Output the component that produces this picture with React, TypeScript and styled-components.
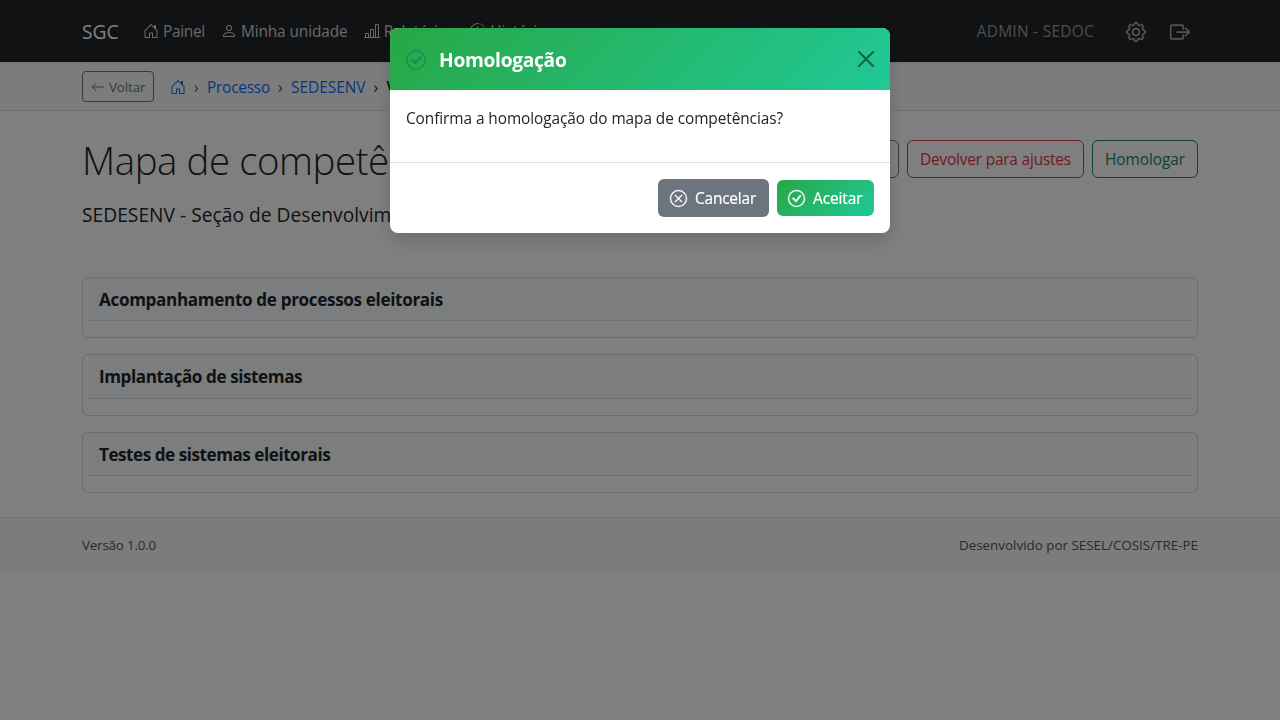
import React from 'react';
import styled, { createGlobalStyle, css } from 'styled-components';
import {
  BsArrowLeft,
  BsBarChartLine,
  BsBoxArrowRight,
  BsCheckCircle,
  BsClockHistory,
  BsGear,
  BsHouseDoor,
  BsPerson,
  BsXCircle,
} from 'react-icons/bs';

const GlobalStyle = createGlobalStyle`
  *, *::before, *::after { box-sizing: border-box; }
  html, body { margin: 0; height: 100%; }
  body {
    background: #fff;
    color: #212529;
    font-family: "Open Sans", "Noto Sans", sans-serif;
    font-size: 15.4px;
    line-height: 24px;
    overflow: hidden;
  }
  svg { display: block; flex: none; }
`;

const successGradient = 'linear-gradient(135deg, #28a745, #20c997)';

const Label = styled.span<{ $tracking?: number }>`
  letter-spacing: ${({ $tracking = 0 }) => $tracking}px;
  white-space: nowrap;
`;

const Container = styled.div`
  display: flex;
  align-items: center;
  width: 1116px;
  margin: 0 auto;
`;

const Navbar = styled.nav`
  display: flex;
  height: 62px;
  background: #212529;
`;

const Brand = styled.a`
  width: 37px;
  margin: 2px 24px 0 0;
  color: #fff;
  font-size: 19.2px;
  letter-spacing: 0.05px;
`;

const NavLinks = styled.div`
  display: flex;
  gap: 16px;
`;

const NavLink = styled.a`
  display: flex;
  align-items: center;
  gap: 4px;
  color: rgba(255, 255, 255, 0.8);

  ${Label} {
    margin-top: 2px;
  }
`;

const NavTools = styled.div`
  display: flex;
  align-items: center;
  gap: 24px;
  margin: 2px 0 0 auto;
  padding-right: 8px;
  color: rgba(255, 255, 255, 0.6);

  svg {
    stroke: currentColor;
    stroke-width: 0.3;
  }
`;

const UserName = styled.span`
  margin-right: 8px;
  color: rgba(255, 255, 255, 0.55);
  letter-spacing: 0.3px;
`;

const TrailBar = styled.div`
  display: flex;
  padding: 8px 0;
  border-top: 1px solid #dee2e6;
  border-bottom: 1px solid #dee2e6;
  background: #f8f9fa;
`;

const BackButton = styled.button`
  display: flex;
  align-items: center;
  gap: 4px;
  width: 72px;
  height: 31px;
  padding: 0 8px;
  border: 1px solid #6c757d;
  border-radius: 4px;
  background: transparent;
  color: #6c757d;
  font: 13.4px/21px "Open Sans", sans-serif;

  ${Label} {
    margin-top: 2px;
  }
`;

const Crumbs = styled.ol`
  display: flex;
  align-items: center;
  margin: 2px 0 0 16px;
  padding: 0;
  list-style: none;
`;

const Crumb = styled.li<{ $current?: boolean }>`
  display: flex;
  align-items: center;
  color: ${({ $current }) => ($current ? '#212529' : '#0d6efd')};
  font-weight: ${({ $current }) => ($current ? 600 : 400)};
  white-space: nowrap;

  svg {
    margin-bottom: 2px;
  }

  li + &::before {
    content: "›";
    width: 5px;
    margin: 0 8px;
    color: ${({ $current }) => ($current ? '#212529' : '#495057')};
    font-weight: 400;
  }
`;

const Main = styled.main`
  width: 1116px;
  margin: 0 auto;
  padding: 24px 0;
`;

const PageHeader = styled.header`
  display: flex;
  align-items: center;
  justify-content: space-between;
  height: 48px;
`;

const PageTitle = styled.h1`
  margin: 2px 0 0;
  font-size: 38.4px;
  font-weight: 300;
  line-height: 48px;
  letter-spacing: -0.42px;
`;

const Actions = styled.div`
  display: flex;
  gap: 8px;
`;

const OutlineButton = styled.button<{ $color: string; $width?: number }>`
  width: ${({ $width }) => ($width ? `${$width}px` : 'auto')};
  height: 38px;
  padding: 2px 12px 0;
  border: 1px solid ${({ $color }) => $color};
  border-radius: 6px;
  background: transparent;
  color: ${({ $color }) => $color};
  font: 15.4px/24px "Open Sans", sans-serif;
`;

const UnitName = styled.p`
  margin: 17px 0 46.9px;
  font-size: 19.2px;
  line-height: 30px;
  letter-spacing: 0.02px;
`;

const CardList = styled.div`
  display: grid;
  gap: 16px;
`;

const Card = styled.section`
  height: 61.5px;
  padding: 0 5px;
  border: 1px solid #d3d6d9;
  border-radius: 6px;
`;

const CardTitle = styled.h2`
  height: 43.2px;
  margin: 0;
  padding: 0 11px;
  border-bottom: 1px solid #dde3ea;
  background: #f8fafc;
  font-size: 17.1px;
  font-weight: 700;
  line-height: 43px;
`;

const Footer = styled.footer`
  display: flex;
  height: 54px;
  padding-top: 1px;
  border-top: 1px solid #dee2e6;
  background: #f8f9fa;
  color: #50565b;
  font-size: 13.4px;
`;

const FooterCredit = styled(Label)`
  margin-left: auto;
`;

const Backdrop = styled.div`
  position: fixed;
  inset: 0;
  display: flex;
  align-items: flex-start;
  justify-content: center;
  padding-top: 28px;
  background: rgba(0, 0, 0, 0.5);
`;

const Dialog = styled.div`
  width: 500px;
  border-radius: 8px;
  background: #fff;
  box-shadow: 0 8px 16px rgba(0, 0, 0, 0.15);
  overflow: hidden;
`;

const DialogHeader = styled.header`
  display: flex;
  align-items: center;
  height: 62px;
  padding: 0 16px;
  background: ${successGradient};
  color: #198754;

  > svg {
    margin-top: 2px;
  }
`;

const DialogTitle = styled.h5`
  margin: 2px 0 0 13px;
  color: #fff;
  font-size: 19.2px;
  font-weight: 700;
  line-height: 30px;
  letter-spacing: -0.3px;
`;

const CloseButton = styled.button`
  margin-left: auto;
  padding: 0;
  border: 0;
  background: none;
  color: #000;
  opacity: 0.5;
`;

const DialogBody = styled.div`
  height: 72px;
  padding: 17px 16px 0;
`;

const DialogFooter = styled.footer`
  display: flex;
  align-items: center;
  justify-content: flex-end;
  gap: 8px;
  height: 71px;
  padding: 0 16px;
  border-top: 1px solid #dee2e6;
`;

const DialogButton = styled.button<{ $primary?: boolean }>`
  display: flex;
  align-items: center;
  gap: 8px;
  border: 0;
  border-radius: 6px;
  color: #fff;
  font: 500 15.4px/24px "Open Sans", sans-serif;
  -webkit-text-stroke: 0.2px currentColor;

  svg {
    stroke: currentColor;
    stroke-width: 0.3;
    overflow: visible;
  }

  ${Label} {
    margin-top: 2px;
  }

  ${({ $primary }) =>
    $primary
      ? css`
          width: 97px;
          height: 36px;
          padding: 0 11px;
          background: ${successGradient};
        `
      : css`
          width: 111px;
          height: 38px;
          padding: 0 12px;
          background: #6c757d;
        `}
`;

const navLinks = [
  { icon: BsHouseDoor, text: 'Painel', tracking: -0.3 },
  { icon: BsPerson, text: 'Minha unidade', tracking: -0.09 },
  { icon: BsBarChartLine, text: 'Relatórios', tracking: -0.14 },
  { icon: BsClockHistory, text: 'Histórico', tracking: -0.1 },
];

const competencies = [
  { text: 'Acompanhamento de processos eleitorais', tracking: -0.34 },
  { text: 'Implantação de sistemas', tracking: -0.41 },
  { text: 'Testes de sistemas eleitorais', tracking: -0.46 },
];

export default function App() {
  return (
    <>
      <GlobalStyle />
      <Navbar>
        <Container>
          <Brand>SGC</Brand>
          <NavLinks>
            {navLinks.map(({ icon: Icon, text, tracking }) => (
              <NavLink key={text}>
                <Icon size={16} />
                <Label $tracking={tracking}>{text}</Label>
              </NavLink>
            ))}
          </NavLinks>
          <NavTools>
            <UserName>ADMIN - SEDOC</UserName>
            <BsGear size={20} />
            <BsBoxArrowRight size={20} />
          </NavTools>
        </Container>
      </Navbar>

      <TrailBar>
        <Container>
          <BackButton>
            <BsArrowLeft size={14} />
            <Label $tracking={-0.14}>Voltar</Label>
          </BackButton>
          <Crumbs>
            <Crumb>
              <BsHouseDoor size={16} />
            </Crumb>
            <Crumb>
              <Label $tracking={-0.22}>Processo</Label>
            </Crumb>
            <Crumb>
              <Label $tracking={0.01}>SEDESENV</Label>
            </Crumb>
            <Crumb $current>Visualização de mapa</Crumb>
          </Crumbs>
        </Container>
      </TrailBar>

      <Main>
        <PageHeader>
          <PageTitle>Mapa de competências técnicas</PageTitle>
          <Actions>
            <OutlineButton $color="#6c757d">Histórico de análise</OutlineButton>
            <OutlineButton $color="#dc3545" $width={177}>
              <Label $tracking={-0.18}>Devolver para ajustes</Label>
            </OutlineButton>
            <OutlineButton $color="#198754" $width={106}>
              <Label $tracking={-0.05}>Homologar</Label>
            </OutlineButton>
          </Actions>
        </PageHeader>
        <UnitName>SEDESENV - Seção de Desenvolvimento de Sistemas</UnitName>
        <CardList>
          {competencies.map(({ text, tracking }) => (
            <Card key={text}>
              <CardTitle>
                <Label $tracking={tracking}>{text}</Label>
              </CardTitle>
            </Card>
          ))}
        </CardList>
      </Main>

      <Footer>
        <Container>
          <Label $tracking={-0.2}>Versão 1.0.0</Label>
          <FooterCredit>Desenvolvido por SESEL/COSIS/TRE-PE</FooterCredit>
        </Container>
      </Footer>

      <Backdrop>
        <Dialog role="dialog">
          <DialogHeader>
            <BsCheckCircle size={20} />
            <DialogTitle>Homologação</DialogTitle>
            <CloseButton aria-label="Fechar">
              <svg width="16" height="16" viewBox="0 0 16 16" fill="currentColor">
                <path d="M.293.293a1 1 0 0 1 1.414 0L8 6.586 14.293.293a1 1 0 1 1 1.414 1.414L9.414 8l6.293 6.293a1 1 0 0 1-1.414 1.414L8 9.414l-6.293 6.293a1 1 0 0 1-1.414-1.414L6.586 8 .293 1.707a1 1 0 0 1 0-1.414z" />
              </svg>
            </CloseButton>
          </DialogHeader>
          <DialogBody>
            <Label $tracking={-0.07}>Confirma a homologação do mapa de competências?</Label>
          </DialogBody>
          <DialogFooter>
            <DialogButton>
              <BsXCircle size={17} />
              <Label $tracking={-0.18}>Cancelar</Label>
            </DialogButton>
            <DialogButton $primary>
              <BsCheckCircle size={17} />
              <Label $tracking={-0.08}>Aceitar</Label>
            </DialogButton>
          </DialogFooter>
        </Dialog>
      </Backdrop>
    </>
  );
}
